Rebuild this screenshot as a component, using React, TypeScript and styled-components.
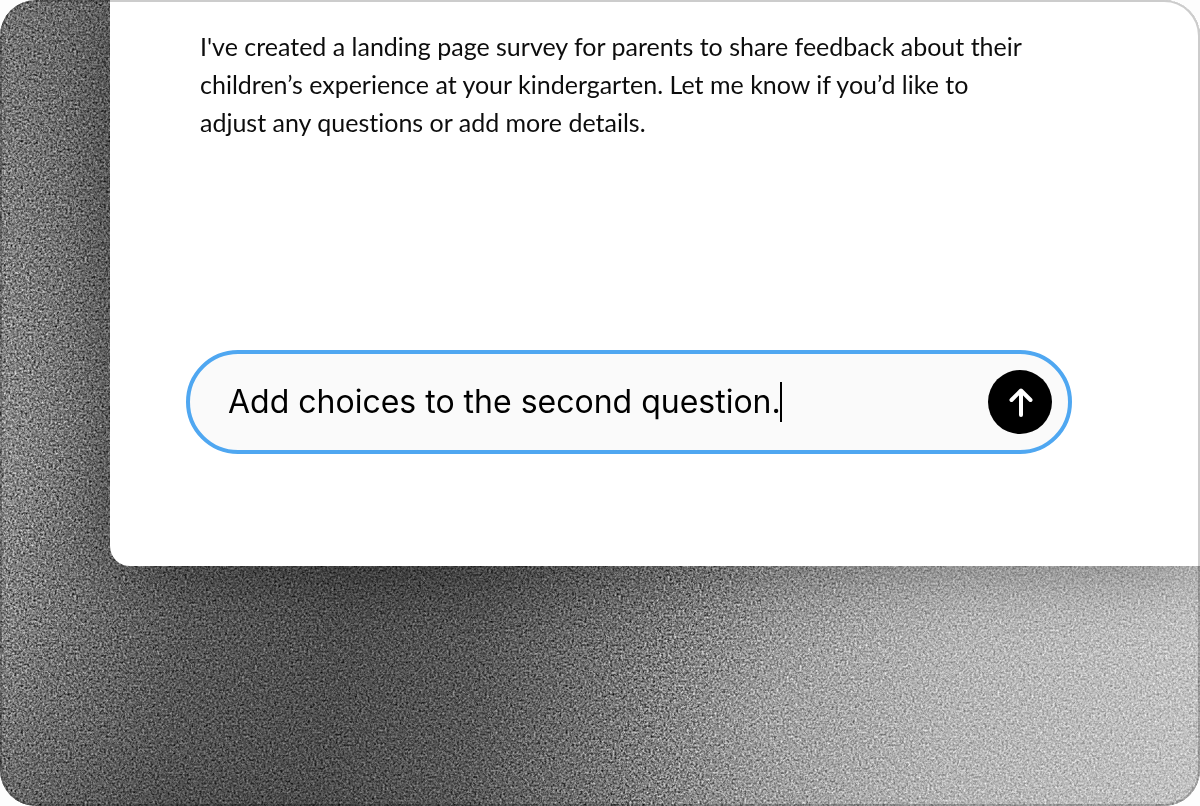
import React, { useState } from "react";
import styled, { createGlobalStyle } from "styled-components";

const GlobalStyle = createGlobalStyle`
  *, *::before, *::after { box-sizing: border-box; }
  body { margin: 0; background: #fdfdfd; }
`;

const Stage = styled.main`
  position: relative;
  isolation: isolate;
  overflow: hidden;
  min-height: 100vh;
  padding-left: 110px;
  border-radius: 36px;
  background:
    radial-gradient(ellipse 40% 26% at 34% 70%, rgba(0, 0, 0, 0.2), transparent),
    radial-gradient(ellipse 60% 28% at 12% 104%, rgba(0, 0, 0, 0.24), transparent),
    radial-gradient(ellipse 30% 60% at 0% 0%, rgba(0, 0, 0, 0.26), transparent),
    linear-gradient(97deg, #989898 0%, #7c7c7c 9%, #626262 20%, #5a5a5a 32%, #626262 43%, #7c7c7c 54%, #9e9e9e 66%, #b4b4b4 80%, #c2c2c2 100%);

  &::after {
    content: "";
    position: absolute;
    inset: 0;
    border: 2px solid rgba(0, 0, 0, 0.2);
    border-radius: inherit;
    pointer-events: none;
  }
`;

const Grain = styled.svg`
  position: absolute;
  inset: 0;
  z-index: -1;
  width: 100%;
  height: 100%;
  mix-blend-mode: overlay;
`;

const Card = styled.section`
  display: flex;
  flex-direction: column;
  gap: 209px;
  padding: 27px 128px 112px 76px;
  border-bottom-left-radius: 20px;
  background: #fff;
  box-shadow: 0 0 72px rgba(0, 0, 0, 0.36);
`;

const Message = styled.p`
  max-width: 848px;
  margin: 0;
  padding-left: 14px;
  color: #0d0d0d;
  font: 400 25px/38px Lato, "Liberation Sans", sans-serif;
  font-variant-ligatures: none;
`;

const Composer = styled.form`
  display: flex;
  align-items: center;
  padding: 16px 16px 16px 38px;
  border: 4px solid #4fa7f1;
  border-radius: 52px;
  background: #fafafa;
`;

const Prompt = styled.input`
  field-sizing: content;
  min-width: 0;
  padding: 0;
  border: 0;
  outline: 0;
  background: none;
  color: #000;
  caret-color: transparent;
  font: 400 32px/40px Inter, "Liberation Sans", sans-serif;
`;

const Caret = styled.span`
  flex: none;
  width: 2px;
  height: 40px;
  margin-left: -1px;
  background: #000;
`;

const SendButton = styled.button`
  display: grid;
  flex: none;
  place-items: center;
  width: 64px;
  height: 64px;
  margin-left: auto;
  padding: 0;
  border: 0;
  border-radius: 50%;
  background: #000;
  color: #fff;
  cursor: pointer;
`;

function ArrowUp() {
  return (
    <svg width="32" height="32" viewBox="0 0 32 32" fill="none" stroke="currentColor" strokeWidth="4" strokeLinecap="round" strokeLinejoin="round" aria-hidden="true">
      <path d="M17 29V5M7.500 14L17 4.500L26.500 14" />
    </svg>
  );
}

export default function App() {
  const [prompt, setPrompt] = useState("Add choices to the second question.");

  return (
    <>
      <GlobalStyle />
      <Stage>
        <Grain aria-hidden="true">
          <filter id="grain" x="0" y="0" width="100%" height="100%" colorInterpolationFilters="sRGB">
            <feTurbulence type="fractalNoise" baseFrequency="0.47" numOctaves="2" seed="4" />
            <feColorMatrix values="0.75 0.75 0 0 -0.25  0.75 0.75 0 0 -0.25  0.75 0.75 0 0 -0.25  0 0 0 0 1" />
          </filter>
          <rect width="100%" height="100%" filter="url(#grain)" />
        </Grain>
        <Card>
          <Message>
            I've created a landing page survey for parents to share feedback about their children’s
            experience at your kindergarten. Let me know if you’d like to adjust any questions or add
            more details.
          </Message>
          <Composer onSubmit={(event) => event.preventDefault()}>
            <Prompt aria-label="Message" value={prompt} onChange={(event) => setPrompt(event.target.value)} />
            <Caret aria-hidden="true" />
            <SendButton type="submit" aria-label="Send">
              <ArrowUp />
            </SendButton>
          </Composer>
        </Card>
      </Stage>
    </>
  );
}
